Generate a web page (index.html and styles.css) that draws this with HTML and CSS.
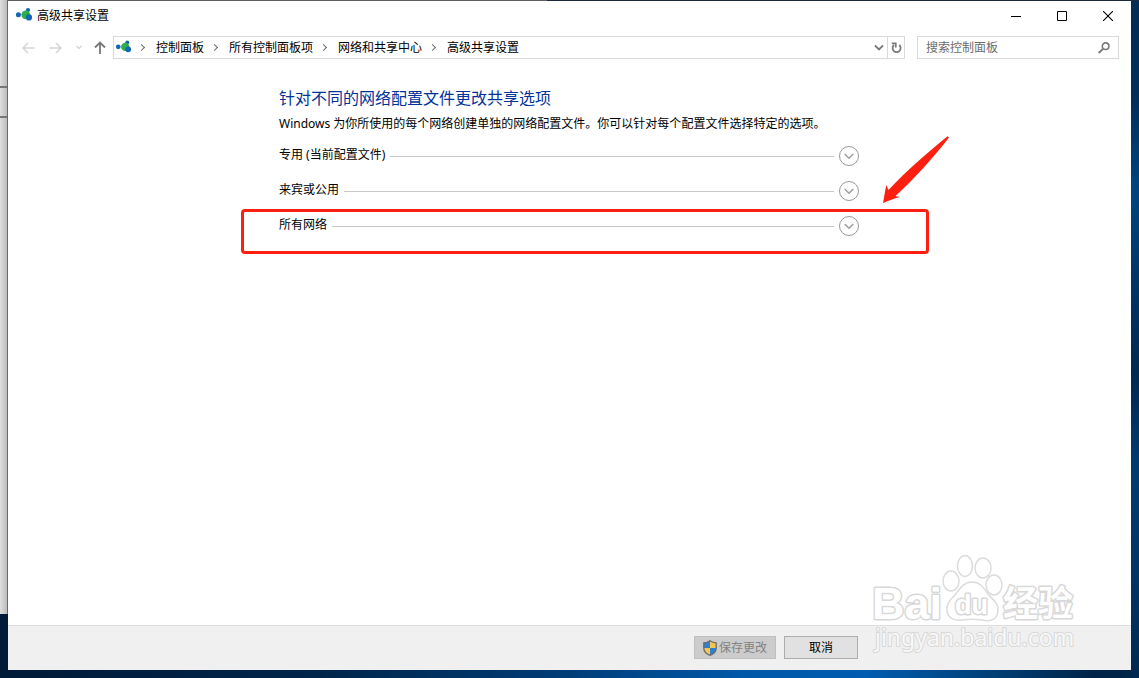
FILE: index.html
```html
<!DOCTYPE html>
<html lang="zh-CN">
<head>
    <meta charset="UTF-8">
    <meta name="viewport" content="width=device-width, initial-scale=1.0">
    <title>高级共享设置</title>
    <link rel="stylesheet" href="styles.css">
</head>
<body>
    <!-- 后面的窗口 -->
    <div class="back-window"></div>

    <div class="window">
        <header class="title-bar">
            <svg class="app-icon" viewBox="0 0 16 16">
                <path d="M2.3 6.7H10L12 2" fill="none" stroke="#b9d3ea" stroke-width="1"/>
                <circle cx="2.4" cy="6.7" r="2.5" fill="#1467b3"/>
                <circle cx="12" cy="2" r="2.1" fill="#1467b3"/>
                <circle cx="9.8" cy="6.8" r="4.4" fill="#2fae4c"/>
                <circle cx="13" cy="9.4" r="3.1" fill="#1467b3"/>
            </svg>
            <h1 class="title">高级共享设置</h1>
            <div class="window-controls">
                <button class="control-btn" aria-label="最小化">
                    <svg width="10" height="10" viewBox="0 0 10 10"><path d="M0 5.5H10" stroke="#000"/></svg>
                </button>
                <button class="control-btn" aria-label="最大化">
                    <svg width="10" height="10" viewBox="0 0 10 10"><path d="M.5 .5H9.5V9.5H.5Z" fill="none" stroke="#000"/></svg>
                </button>
                <button class="control-btn" aria-label="关闭">
                    <svg width="10" height="10" viewBox="0 0 10 10"><path d="M0 0L10 10M10 0L0 10" stroke="#000" stroke-width="1.1"/></svg>
                </button>
            </div>
        </header>

        <nav class="nav-bar">
            <div class="nav-buttons">
                <button class="nav-btn" aria-label="后退" disabled>
                    <svg width="13" height="12" viewBox="0 0 13 12"><path d="M6 1L1 6L6 11M1 6H12.5" fill="none" stroke="#d6d6d6" stroke-width="1.5"/></svg>
                </button>
                <button class="nav-btn" aria-label="前进" disabled>
                    <svg width="13" height="12" viewBox="0 0 13 12"><path d="M7 1L12 6L7 11M12 6H.5" fill="none" stroke="#d6d6d6" stroke-width="1.5"/></svg>
                </button>
                <button class="nav-btn small" aria-label="最近浏览的位置" disabled>
                    <svg width="6" height="5" viewBox="0 0 6 5"><path d="M.5 1L3 3.5L5.5 1" fill="none" stroke="#d6d6d6" stroke-width="1.4"/></svg>
                </button>
                <button class="nav-btn small" aria-label="上移">
                    <svg width="12" height="13" viewBox="0 0 12 13"><path d="M1 6.5L6 1.5L11 6.5M6 1.5V13" fill="none" stroke="#777" stroke-width="1.8"/></svg>
                </button>
            </div>

            <div class="address-bar">
                <svg class="app-icon in-address" viewBox="0 0 16 16">
                    <path d="M2.3 6.7H10L12 2" fill="none" stroke="#b9d3ea" stroke-width="1"/>
                    <circle cx="2.4" cy="6.7" r="2.5" fill="#1467b3"/>
                    <circle cx="12" cy="2" r="2.1" fill="#1467b3"/>
                    <circle cx="9.8" cy="6.8" r="4.4" fill="#2fae4c"/>
                    <circle cx="13" cy="9.4" r="3.1" fill="#1467b3"/>
                </svg>
                <a class="crumb" href="#">控制面板</a>
                <a class="crumb" href="#">所有控制面板项</a>
                <a class="crumb" href="#">网络和共享中心</a>
                <a class="crumb" href="#">高级共享设置</a>
                <button class="address-btn history" aria-label="以前的位置">
                    <svg width="10" height="7" viewBox="0 0 10 7"><path d="M1 1.5L5 5.5L9 1.5" fill="none" stroke="#7a7a7a" stroke-width="1.8"/></svg>
                </button>
                <button class="address-btn refresh" aria-label="刷新">
                    <svg width="11" height="12" viewBox="0 0 11 12">
                        <path d="M8.2 3A4 4 0 1 1 3 3" fill="none" stroke="#7a7a7a" stroke-width="1.8"/>
                        <path d="M.8 1.4H4.800V5.500" fill="none" stroke="#7a7a7a" stroke-width="1.700"/>
                    </svg>
                </button>
            </div>

            <form class="search-box">
                <input class="search-input" type="text" aria-label="搜索控制面板" placeholder="搜索控制面板">
                <button class="search-btn" type="button" aria-label="搜索">
                    <svg width="12" height="12" viewBox="0 0 12 12">
                        <circle cx="7.6" cy="4.2" r="3.3" fill="none" stroke="#7a7a7a" stroke-width="1.6"/>
                        <path d="M5.2 6.6L.7 11" stroke="#7a7a7a" stroke-width="2"/>
                    </svg>
                </button>
            </form>
        </nav>

        <main class="content">
            <h2 class="heading">针对不同的网络配置文件更改共享选项</h2>
            <p class="description">Windows 为你所使用的每个网络创建单独的网络配置文件。你可以针对每个配置文件选择特定的选项。</p>

            <div class="profile">
                <span class="profile-name" id="profile1">专用 (当前配置文件)</span>
                <span class="profile-line"></span>
                <button class="expand-btn" aria-labelledby="profile1">
                    <svg width="10" height="7" viewBox="0 0 10 7"><path d="M.7 1L5 5.2L9.3 1" fill="none" stroke="#a0a0a0" stroke-width="1.6"/></svg>
                </button>
            </div>
            <div class="profile">
                <span class="profile-name" id="profile2">来宾或公用</span>
                <span class="profile-line"></span>
                <button class="expand-btn" aria-labelledby="profile2">
                    <svg width="10" height="7" viewBox="0 0 10 7"><path d="M.7 1L5 5.2L9.3 1" fill="none" stroke="#a0a0a0" stroke-width="1.6"/></svg>
                </button>
            </div>
            <div class="profile">
                <span class="profile-name" id="profile3">所有网络</span>
                <span class="profile-line"></span>
                <button class="expand-btn" aria-labelledby="profile3">
                    <svg width="10" height="7" viewBox="0 0 10 7"><path d="M.7 1L5 5.2L9.3 1" fill="none" stroke="#a0a0a0" stroke-width="1.6"/></svg>
                </button>
                <!-- 红框和箭头 -->
                <div class="mark-frame"></div>
                <svg class="mark-arrow" viewBox="0 0 66 68">
                    <path d="M64.600 .2L66 1.400C50 22 32 42 12.500 60L16.500 61C11 62.500 6 64.500 0 67L3.200 49L5.500 54C24 34 44 17 64.600 .2Z" fill="#fd2010"/>
                </svg>
            </div>
        </main>

        <footer class="footer">
            <div class="footer-buttons">
                <button class="btn save" disabled>
                    <svg width="14" height="16" viewBox="0 0 14 16">
                        <path d="M7 .5C5 2 3 2.5 .7 2.6V8C.7 11.5 3.5 14 7 15.5C10.5 14 13.3 11.5 13.3 8V2.6C11 2.5 9 2 7 .5Z" fill="#f5c451"/>
                        <path d="M7 .5C5 2 3 2.5 .7 2.6V8H7ZM7 8H13.3C13.3 11.5 10.5 14 7 15.5Z" fill="#2d7fd0"/>
                        <path d="M7 .7C5 2.2 3 2.7 .8 2.8V8C.8 11.5 3.5 14 7 15.3C10.5 14 13.2 11.5 13.2 8V2.8C11 2.7 9 2.2 7 .7Z" fill="none" stroke="#6b6b6b" stroke-width="1.3"/>
                    </svg>
                    <span>保存更改</span>
                </button>
                <button class="btn">取消</button>
            </div>
        </footer>

        <div class="watermark">
            <svg width="210" height="106" viewBox="0 0 210 106">
                <g class="wm-shape">
                    <ellipse cx="81" cy="27" rx="8" ry="10"/>
                    <ellipse cx="95" cy="12" rx="7.5" ry="10.5"/>
                    <ellipse cx="113" cy="14" rx="8" ry="10"/>
                    <ellipse cx="124" cy="31" rx="8" ry="10"/>
                    <path d="M102 28C93 28 89 36 85 41C80 46 76 50 77 57C78 65 86 67 92 66C98 65 106 65 112 66C120 68 127 66 128 57C129 49 122 45 118 40C114 34 110 28 102 28Z"/>
                </g>
                <text class="wm-text" x="2" y="65" font-size="45">Bai</text>
                <text class="wm-text du" x="85" y="60" font-size="27">du</text>
                <text class="wm-text cjk" x="133" y="62" font-size="35">经验</text>
                <text class="wm-text domain" x="5" y="92" font-size="23">jingyan.baidu.com</text>
            </svg>
        </div>
    </div>
</body>
</html>
```
FILE: styles.css
```css
* {
    margin: 0;
    padding: 0;
    box-sizing: border-box;
}

body {
    min-height: 100vh;
    padding: 1px 8px 8px;
    display: flex;
    position: relative;
    font-family: "Noto Sans", "Noto Sans CJK SC", sans-serif;
    font-size: 12px;
    line-height: 16px;
    color: #000;
    background:
        linear-gradient(90deg, #606060 0 48%, #1b2a3a 48%) top / 100% 1px no-repeat,
        linear-gradient(#002c55, #002f5c 15%, #004480 28%, #003566 42%, #002850 55%, #003b70 68%, #003566 85%, #002850) right / 8px 100% no-repeat,
        linear-gradient(90deg, #001a38, #00254a 28%, #003d78 50%, #0058a8 65%, #005cb0 76%, #00427c 86%, #002448 96%);
}

button {
    border: none;
    background: none;
    font: inherit;
    color: inherit;
    display: flex;
    align-items: center;
    justify-content: center;
}

svg {
    display: block;
    flex-shrink: 0;
}

.back-window {
    position: absolute;
    top: 0;
    bottom: 64px;
    left: 0;
    width: 8px;
    border-right: 1px solid #6a6a6a;
    background:
        linear-gradient(#777, #777) 0 86px / 8px 2px no-repeat,
        linear-gradient(#777, #777) 0 116px / 8px 2px no-repeat,
        linear-gradient(90deg, #dedede, #bcbcbc);
}

.window {
    flex: 1;
    display: flex;
    flex-direction: column;
    position: relative;
    background: #fff;
}

/* 标题栏 */
.title-bar {
    height: 29px;
    padding-left: 8px;
    display: flex;
    align-items: center;
}

.app-icon {
    width: 16px;
    height: 16px;
    overflow: visible;
}

.title {
    margin-left: 5px;
    flex: 1;
    font-size: 12px;
    font-weight: normal;
}

.window-controls {
    display: flex;
    align-self: stretch;
}

.control-btn {
    width: 46px;
}

/* 导航栏 */
.nav-bar {
    margin-top: 6px;
    padding: 0 12px;
    display: flex;
    align-items: center;
}

.nav-buttons {
    display: flex;
    gap: 11px;
    margin-right: 8px;
}

.nav-btn {
    width: 16px;
    height: 22px;
}

.nav-btn.small {
    width: 10px;
}

.address-bar {
    flex: 1;
    height: 23px;
    padding-left: 2px;
    display: flex;
    align-items: center;
    border: 1px solid #d9d9d9;
}

.app-icon.in-address {
    width: 15px;
}

.crumb {
    display: flex;
    align-items: center;
    color: #000;
    text-decoration: none;
    white-space: nowrap;
}

.crumb::before {
    content: "";
    width: 4px;
    height: 4px;
    margin: 0 12px 0 8px;
    border: solid #6e6e6e;
    border-width: 1px 1px 0 0;
    transform: rotate(45deg);
}

.address-btn {
    width: 17px;
    align-self: stretch;
}

.address-btn.history {
    margin-left: auto;
}

.address-btn.refresh {
    border-left: 1px solid #d9d9d9;
}

.search-box {
    width: 202px;
    height: 23px;
    margin-left: 12px;
    display: flex;
    border: 1px solid #d9d9d9;
}

.search-input {
    flex: 1;
    min-width: 0;
    padding-left: 8px;
    border: none;
    outline: none;
    background: none;
    font: inherit;
}

.search-input::placeholder {
    color: #6d6d6d;
}

.search-btn {
    width: 28px;
}

/* 内容 */
.content {
    flex: 1;
    width: 100%;
    max-width: 581px;
    margin: 0 auto;
    padding: 27px 1px 0 0;
}

.heading {
    font-size: 16px;
    font-weight: normal;
    line-height: 24px;
    color: #003399;
}

.description {
    margin: 6px 0 14px;
    white-space: nowrap;
}

.profile {
    height: 20px;
    margin-bottom: 15px;
    display: flex;
    align-items: center;
    position: relative;
}

.profile-name {
    height: 18px;
}

.profile-line {
    flex: 1;
    height: 1px;
    margin: 0 5px;
    background: #c8c8c8;
}

.expand-btn {
    width: 20px;
    height: 20px;
    border: 1px solid #999;
    border-radius: 50%;
}

.mark-frame {
    position: absolute;
    top: -7px;
    left: -38px;
    right: -70px;
    height: 45px;
    border: 3px solid #fd2010;
    border-radius: 4px;
    pointer-events: none;
}

.mark-arrow {
    position: absolute;
    top: -80px;
    right: -90px;
    width: 66px;
    height: 68px;
}

/* 底部按钮 */
.footer {
    padding: 10px 0 11px;
    border-top: 1px solid #dfdfdf;
    background: #f0f0f0;
}

.footer-buttons {
    max-width: 581px;
    margin: 0 auto;
    padding-right: 2px;
    display: flex;
    justify-content: flex-end;
    gap: 8px;
}

.btn {
    width: 74px;
    height: 23px;
    border: 1px solid #adadad;
    background: #e1e1e1;
}

.btn.save {
    width: 82px;
    gap: 2px;
    border-color: #bfbfbf;
    background: #ccc;
    color: #838383;
}

/* 水印 */
.watermark {
    position: absolute;
    right: 51px;
    bottom: 10px;
    pointer-events: none;
}

.wm-shape {
    fill: #fff;
    stroke: #dcdcdc;
    stroke-width: 1.5px;
}

.wm-text {
    fill: #fff;
    stroke: #d8d8d8;
    stroke-width: 3px;
    stroke-linejoin: round;
    paint-order: stroke;
    font-family: "Liberation Sans", sans-serif;
    font-weight: bold;
}

.wm-text.cjk {
    font-family: "Noto Sans CJK SC", sans-serif;
}

.wm-text.domain {
    fill: #f7f7f7;
    stroke-width: 2px;
    font-family: "Noto Sans", sans-serif;
    font-weight: normal;
}
```
